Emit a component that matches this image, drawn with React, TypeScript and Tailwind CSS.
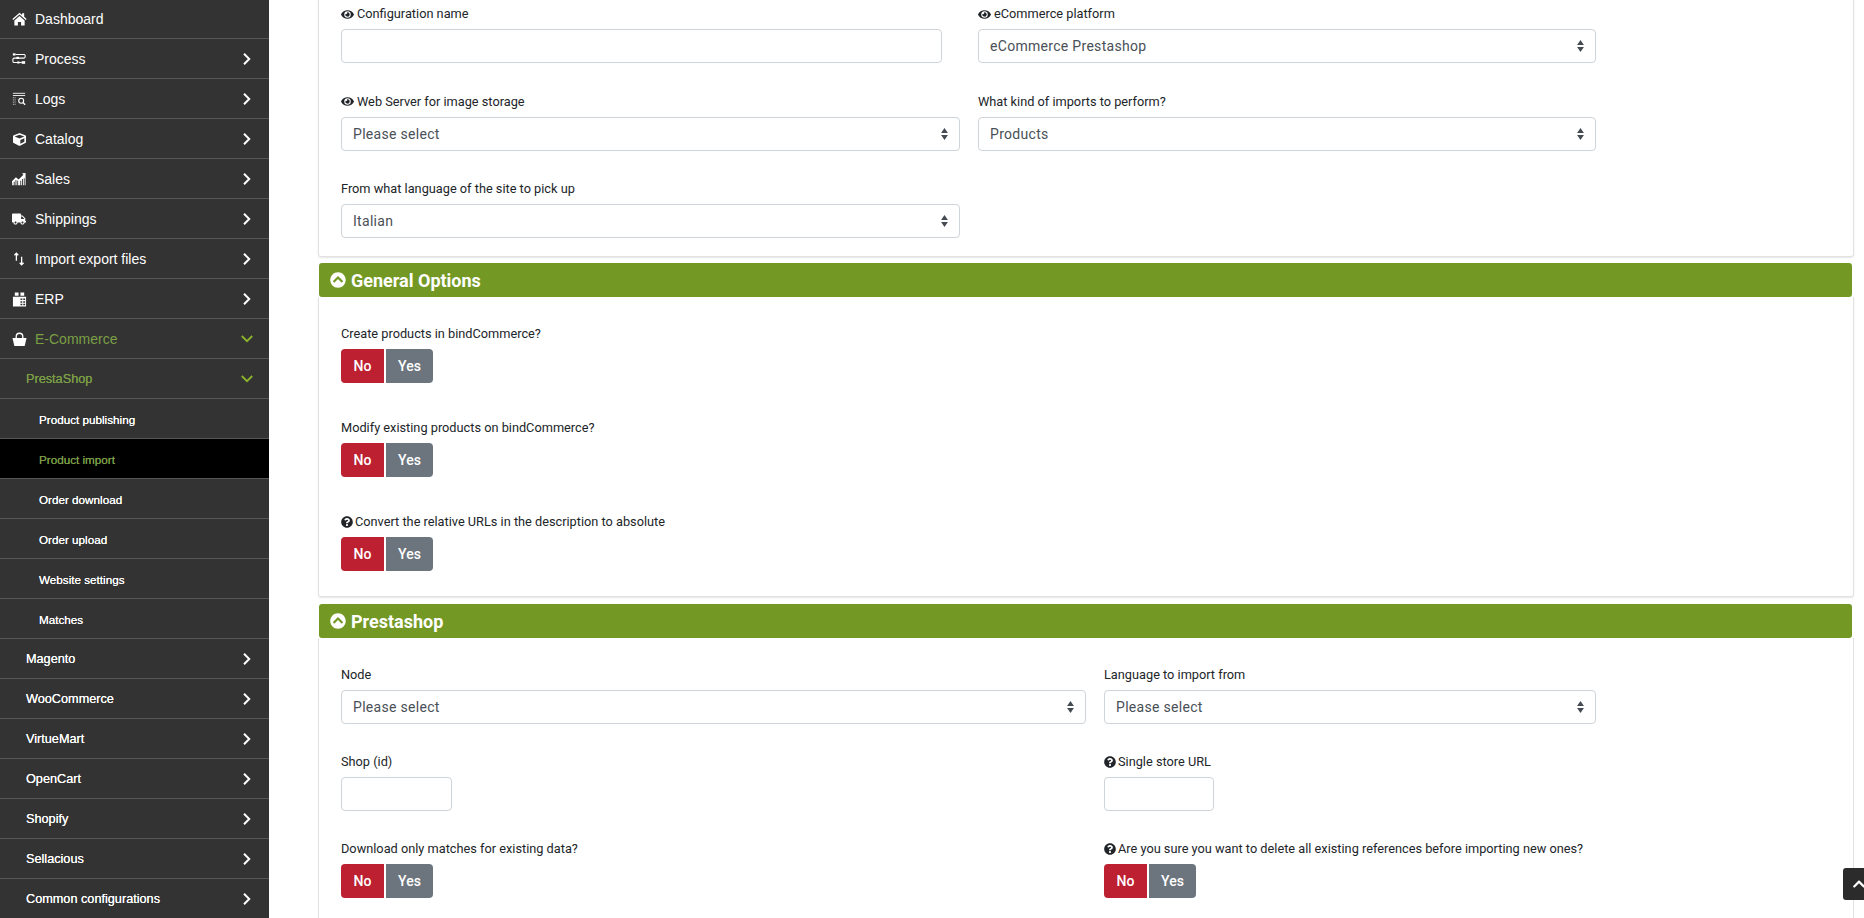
import { ReactNode } from "react";
import { FaCube, FaTruck, FaEye, FaQuestionCircle, FaChevronCircleUp, FaChevronUp } from "react-icons/fa";

const HomeIcon = () => (
  <svg viewBox="0 0 16 15" className="h-[14px] w-[15px]" fill="currentColor">
    <path d="M8 .8.3 7.5l1 1.1L8 2.8l6.7 5.8 1-1.1L13 5.2V1.4h-2.2v1.9zM2.5 9.2 8 4.4l5.5 4.8v5.3H9.7v-3.7H6.3v3.7H2.5z" />
  </svg>
);
const ProcessIcon = () => (
  <svg viewBox="0 0 16 16" className="h-[14px] w-[14px]" fill="none" stroke="currentColor" strokeWidth="1.2">
    <rect x="1" y="1.5" width="3" height="2.5" fill="currentColor" stroke="none" />
    <path d="M4 2.8h10a1.2 1.2 0 0 1 1 1.2v1.5a1.5 1.5 0 0 1-1.5 1.5H2.5A1.5 1.5 0 0 0 1 8.5v2A1.5 1.5 0 0 0 2.5 12H11" />
    <rect x="5" y="5.5" width="3" height="2.5" fill="currentColor" stroke="none" />
    <rect x="11" y="10.5" width="4" height="3" fill="currentColor" stroke="none" />
    <rect x="6" y="10.8" width="2.5" height="2.4" fill="currentColor" stroke="none" />
  </svg>
);
const LogsIcon = () => (
  <svg viewBox="0 0 16 16" className="h-[14px] w-[14px]" fill="none" stroke="currentColor" strokeWidth="1">
    <path d="M1 1.5h14M1 4h14" />
    <path d="M1 6.5h3M1 9h3M1 11.5h3M1 14h3" strokeDasharray="1 1" />
    <circle cx="10.5" cy="10" r="2.8" strokeWidth="1.3" />
    <path d="M12.5 12l2.5 2.5" strokeWidth="1.6" />
  </svg>
);
const SalesIcon = () => (
  <svg viewBox="0 0 16 16" className="h-[14px] w-[14px]" fill="currentColor">
    <path d="M0 15V10.5L4.5 6l3 2.5L13 3l-1.5-1.5L15.5 1v14h-1V7h-1v8h-1V8h-1v7h-1V10h-1v5H7v-5H6v5H5v-6H4v6H3v-4H2v4H1v-3H.8v3z" />
  </svg>
);
const TransferIcon = () => (
  <svg viewBox="0 0 16 16" className="h-[14px] w-[14px]" fill="none" stroke="currentColor" strokeWidth="1.5">
    <path d="M5 10V1.5M2.8 3.8 5 1.5l2.2 2.3" />
    <path d="M11 5.5V14.5M8.8 12.2 11 14.5l2.2-2.3" />
  </svg>
);
const ErpIcon = () => (
  <svg viewBox="0 0 16 16" className="h-[15px] w-[15px]" fill="currentColor">
    <path d="M3 .5h4v3.5H3zM9 .5h4v3.5H9z" />
    <path fillRule="evenodd" d="M1 5h14v10.5H1zM9 7v1.6h2V7zm3 0v1.6h2V7zM9 9.8v1.6h2V9.8zm3 0v1.6h2V9.8zM9 12.6v1.6h2v-1.6zm3 0v1.6h2v-1.6z" />
  </svg>
);
const BasketIcon = () => (
  <svg viewBox="0 0 16 16" className="h-[15px] w-[15px] text-white" fill="none" stroke="currentColor">
    <path d="M.5 6.5h15l-2 8.5h-11z" fill="currentColor" stroke="none" />
    <path d="M4.5 8V4.8a3.5 3.5 0 0 1 7 0V8" strokeWidth="1.4" />
  </svg>
);
const ChevronRight = () => (
  <svg viewBox="0 0 12 12" className="ml-auto h-[12px] w-[12px] text-white" fill="none" stroke="currentColor" strokeWidth="2">
    <path d="M3 .8 8.2 6 3 11.2" />
  </svg>
);
const ChevronDown = () => (
  <svg viewBox="0 0 12 12" className="ml-auto h-[12px] w-[12px] text-[#8ab02c]" fill="none" stroke="currentColor" strokeWidth="2">
    <path d="M.8 3 6 8.2 11.2 3" />
  </svg>
);

type NavItem = { label: string; icon?: ReactNode; level: 0 | 1 | 2; chevron?: "right" | "down"; green?: boolean; active?: boolean };

const nav: NavItem[] = [
  { label: "Dashboard", icon: <HomeIcon />, level: 0 },
  { label: "Process", icon: <ProcessIcon />, level: 0, chevron: "right" },
  { label: "Logs", icon: <LogsIcon />, level: 0, chevron: "right" },
  { label: "Catalog", icon: <FaCube className="h-[13px] w-[13px]" />, level: 0, chevron: "right" },
  { label: "Sales", icon: <SalesIcon />, level: 0, chevron: "right" },
  { label: "Shippings", icon: <FaTruck className="h-[14px] w-[14px]" />, level: 0, chevron: "right" },
  { label: "Import export files", icon: <TransferIcon />, level: 0, chevron: "right" },
  { label: "ERP", icon: <ErpIcon />, level: 0, chevron: "right" },
  { label: "E-Commerce", icon: <BasketIcon />, level: 0, chevron: "down", green: true },
  { label: "PrestaShop", level: 1, chevron: "down", green: true },
  { label: "Product publishing", level: 2 },
  { label: "Product import", level: 2, green: true, active: true },
  { label: "Order download", level: 2 },
  { label: "Order upload", level: 2 },
  { label: "Website settings", level: 2 },
  { label: "Matches", level: 2 },
  { label: "Magento", level: 1, chevron: "right" },
  { label: "WooCommerce", level: 1, chevron: "right" },
  { label: "VirtueMart", level: 1, chevron: "right" },
  { label: "OpenCart", level: 1, chevron: "right" },
  { label: "Shopify", level: 1, chevron: "right" },
  { label: "Sellacious", level: 1, chevron: "right" },
  { label: "Common configurations", level: 1, chevron: "right" },
];

function NavRow({ item }: { item: NavItem }) {
  return (
    <div className={`flex h-[40px] shrink-0 items-center border-b border-[#565656] pr-[16px] pt-[1px] font-['Liberation_Sans',sans-serif] ${item.active ? "bg-black" : ""} ${item.green ? "text-[#7a9f45]" : "text-white"}`}>
      {item.level === 0 && (
        <>
          <span className="flex w-[35px] shrink-0 justify-center pl-[3px] text-white">{item.icon}</span>
          <span className="text-[14px]">{item.label}</span>
        </>
      )}
      {item.level === 1 && <span className="pl-[26px] pt-[2px] text-[12.7px] [text-shadow:0_0_0.4px_currentColor]">{item.label}</span>}
      {item.level === 2 && <span className="pl-[39px] pt-[2px] text-[11.7px] [text-shadow:0_0_0.4px_currentColor]">{item.label}</span>}
      {item.chevron === "right" && <ChevronRight />}
      {item.chevron === "down" && <ChevronDown />}
    </div>
  );
}

function Label({ children, icon }: { children: ReactNode; icon?: "eye" | "help" }) {
  return (
    <div className={`mb-[6px] flex h-[20px] items-center pt-[2px] text-[12.75px] text-[#212529] ${icon === "help" ? "gap-[2px]" : "gap-[3px]"}`}>
      {icon === "eye" && <FaEye className="h-[13px] w-[13px]" />}
      {icon === "help" && <FaQuestionCircle className="h-[12px] w-[12px]" />}
      <span>{children}</span>
    </div>
  );
}

function SelectBox({ value, className = "" }: { value: string; className?: string }) {
  return (
    <div className={`relative ${className}`}>
      <select defaultValue={value} className="h-[34px] w-full appearance-none rounded-[4px] border border-[#ced4da] bg-white pl-[11px] pr-[24px] pt-[1px] text-[14px] tracking-[0.3px] text-[#495057]">
        <option>{value}</option>
      </select>
      <svg viewBox="0 0 8 14" className="pointer-events-none absolute right-[11px] top-[11px] h-[12px] w-[9px]" fill="#454b52">
        <path d="M4 0 8 5.8H0zM4 14 0 8.2h8z" />
      </svg>
    </div>
  );
}

function TextBox({ className = "" }: { className?: string }) {
  return <input className={`block h-[34px] rounded-[4px] border border-[#ced4da] bg-white ${className}`} />;
}

function Toggle() {
  return (
    <div className="flex gap-[2px] text-[14px] font-medium text-white">
      <button className="flex h-[34px] w-[43px] items-center justify-center rounded-l-[4px] bg-[#bd2031] pt-[1px]">No</button>
      <button className="flex h-[34px] w-[47px] items-center justify-center rounded-r-[4px] bg-[#6c757d] pt-[1px]">Yes</button>
    </div>
  );
}

function SectionHead({ title }: { title: string }) {
  return (
    <div className="ml-px mr-[2px] flex h-[34px] items-center gap-[5px] rounded-[3px] bg-[#739924] pl-[11px] text-[18px] font-bold text-white">
      <FaChevronCircleUp className="h-[16px] w-[16px]" />
      <span>{title}</span>
    </div>
  );
}

export default function App() {
  return (
    <div className="flex h-[918px] overflow-hidden bg-white font-['Roboto',sans-serif]">
      <aside className="w-[269px] shrink-0 overflow-hidden bg-[#333333]">
        <div className="-mt-px flex flex-col">
          {nav.map((item) => (
            <NavRow key={item.label} item={item} />
          ))}
        </div>
      </aside>
      <main className="relative flex-1 overflow-hidden pl-[49px] pr-[10px]">
        <section className="-mt-px rounded-b-[3px] border-x border-b border-[#e2e2e2] pb-[18px] pl-[22px] pt-[4px] shadow-[0_1px_2px_rgba(0,0,0,0.1)]">
          <div className="grid grid-cols-[619px_618px] gap-x-[18px] gap-y-[27.5px]">
            <div>
              <Label icon="eye">Configuration name</Label>
              <TextBox className="w-[601px]" />
            </div>
            <div>
              <Label icon="eye">eCommerce platform</Label>
              <SelectBox value="eCommerce Prestashop" />
            </div>
            <div>
              <Label icon="eye">Web Server for image storage</Label>
              <SelectBox value="Please select" />
            </div>
            <div>
              <Label>What kind of imports to perform?</Label>
              <SelectBox value="Products" />
            </div>
            <div>
              <Label>From what language of the site to pick up</Label>
              <SelectBox value="Italian" />
            </div>
          </div>
        </section>

        <div className="mt-[6px]">
          <SectionHead title="General Options" />
          <section className="flex flex-col gap-[34px] rounded-b-[3px] border-x border-b border-[#e2e2e2] pb-[25px] pl-[22px] pt-[26px] shadow-[0_1px_2px_rgba(0,0,0,0.1)]">
            <div>
              <Label>Create products in bindCommerce?</Label>
              <Toggle />
            </div>
            <div>
              <Label>Modify existing products on bindCommerce?</Label>
              <Toggle />
            </div>
            <div>
              <Label icon="help">Convert the relative URLs in the description to absolute</Label>
              <Toggle />
            </div>
          </section>
        </div>

        <div className="mt-[7px]">
          <SectionHead title="Prestashop" />
          <section className="border-x border-[#e2e2e2] pb-[40px] pl-[22px] pt-[26px]">
            <div className="grid grid-cols-[745px_492px] gap-x-[18px] gap-y-[27px]">
              <div>
                <Label>Node</Label>
                <SelectBox value="Please select" />
              </div>
              <div>
                <Label>Language to import from</Label>
                <SelectBox value="Please select" />
              </div>
              <div>
                <Label>Shop (id)</Label>
                <TextBox className="w-[111px]" />
              </div>
              <div>
                <Label icon="help">Single store URL</Label>
                <TextBox className="w-[110px]" />
              </div>
              <div>
                <Label>Download only matches for existing data?</Label>
                <Toggle />
              </div>
              <div>
                <Label icon="help">Are you sure you want to delete all existing references before importing new ones?</Label>
                <Toggle />
              </div>
            </div>
          </section>
        </div>

        <button className="absolute bottom-[18px] right-0 flex h-[32px] w-[21px] items-center justify-start rounded-l-[3px] bg-[#2b2b2b] pl-[9px] text-white">
          <FaChevronUp className="h-[14px] w-[14px] shrink-0" />
        </button>
      </main>
    </div>
  );
}
